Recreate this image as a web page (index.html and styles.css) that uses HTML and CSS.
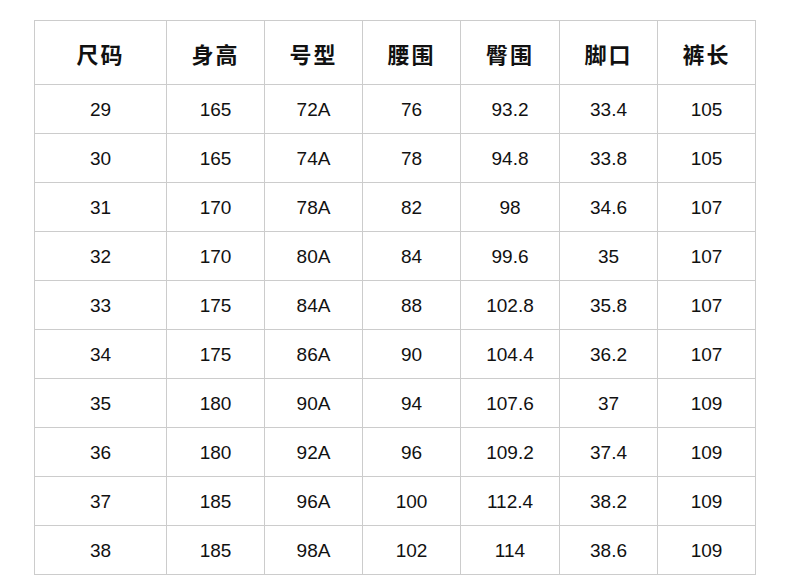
FILE: index.html
```html
<!DOCTYPE html>
<html lang="zh">
<head>
<meta charset="utf-8">
<title>尺码表</title>
<link rel="stylesheet" href="styles.css">
</head>
<body>
<table class="size-table">
  <colgroup>
    <col class="c-first"><col class="c"><col class="c"><col class="c"><col class="c-wide"><col class="c"><col class="c">
  </colgroup>
  <thead>
    <tr><th>尺码</th><th>身高</th><th>号型</th><th>腰围</th><th>臀围</th><th>脚口</th><th>裤长</th></tr>
  </thead>
  <tbody>
    <tr><td>29</td><td>165</td><td>72A</td><td>76</td><td>93.2</td><td>33.4</td><td>105</td></tr>
    <tr><td>30</td><td>165</td><td>74A</td><td>78</td><td>94.8</td><td>33.8</td><td>105</td></tr>
    <tr><td>31</td><td>170</td><td>78A</td><td>82</td><td>98</td><td>34.6</td><td>107</td></tr>
    <tr><td>32</td><td>170</td><td>80A</td><td>84</td><td>99.6</td><td>35</td><td>107</td></tr>
    <tr><td>33</td><td>175</td><td>84A</td><td>88</td><td>102.8</td><td>35.8</td><td>107</td></tr>
    <tr><td>34</td><td>175</td><td>86A</td><td>90</td><td>104.4</td><td>36.2</td><td>107</td></tr>
    <tr><td>35</td><td>180</td><td>90A</td><td>94</td><td>107.6</td><td>37</td><td>109</td></tr>
    <tr><td>36</td><td>180</td><td>92A</td><td>96</td><td>109.2</td><td>37.4</td><td>109</td></tr>
    <tr><td>37</td><td>185</td><td>96A</td><td>100</td><td>112.4</td><td>38.2</td><td>109</td></tr>
    <tr><td>38</td><td>185</td><td>98A</td><td>102</td><td>114</td><td>38.6</td><td>109</td></tr>
  </tbody>
</table>
</body>
</html>
```
FILE: styles.css
```css
html, body {
  margin: 0;
  padding: 0;
  background: #ffffff;
}
body {
  padding: 20px 0 0 34px;
}
.size-table {
  border-collapse: collapse;
  table-layout: fixed;
  width: 721px;
  color: #111111;
  font-family: "Liberation Sans", "Noto Sans CJK SC", sans-serif;
}
.c-first { width: 132px; }
.c { width: 98px; }
.c-wide { width: 99px; }
.size-table th,
.size-table td {
  border: 1px solid #cccccc;
  text-align: center;
  vertical-align: middle;
  padding: 0;
}
.size-table th {
  height: 63px;
  font-family: "Noto Sans CJK SC", sans-serif;
  font-weight: 700;
  font-size: 22px;
  letter-spacing: 2px;
  line-height: 1;
}
.size-table td {
  height: 48px;
  font-size: 19px;
  line-height: 1;
}
```
